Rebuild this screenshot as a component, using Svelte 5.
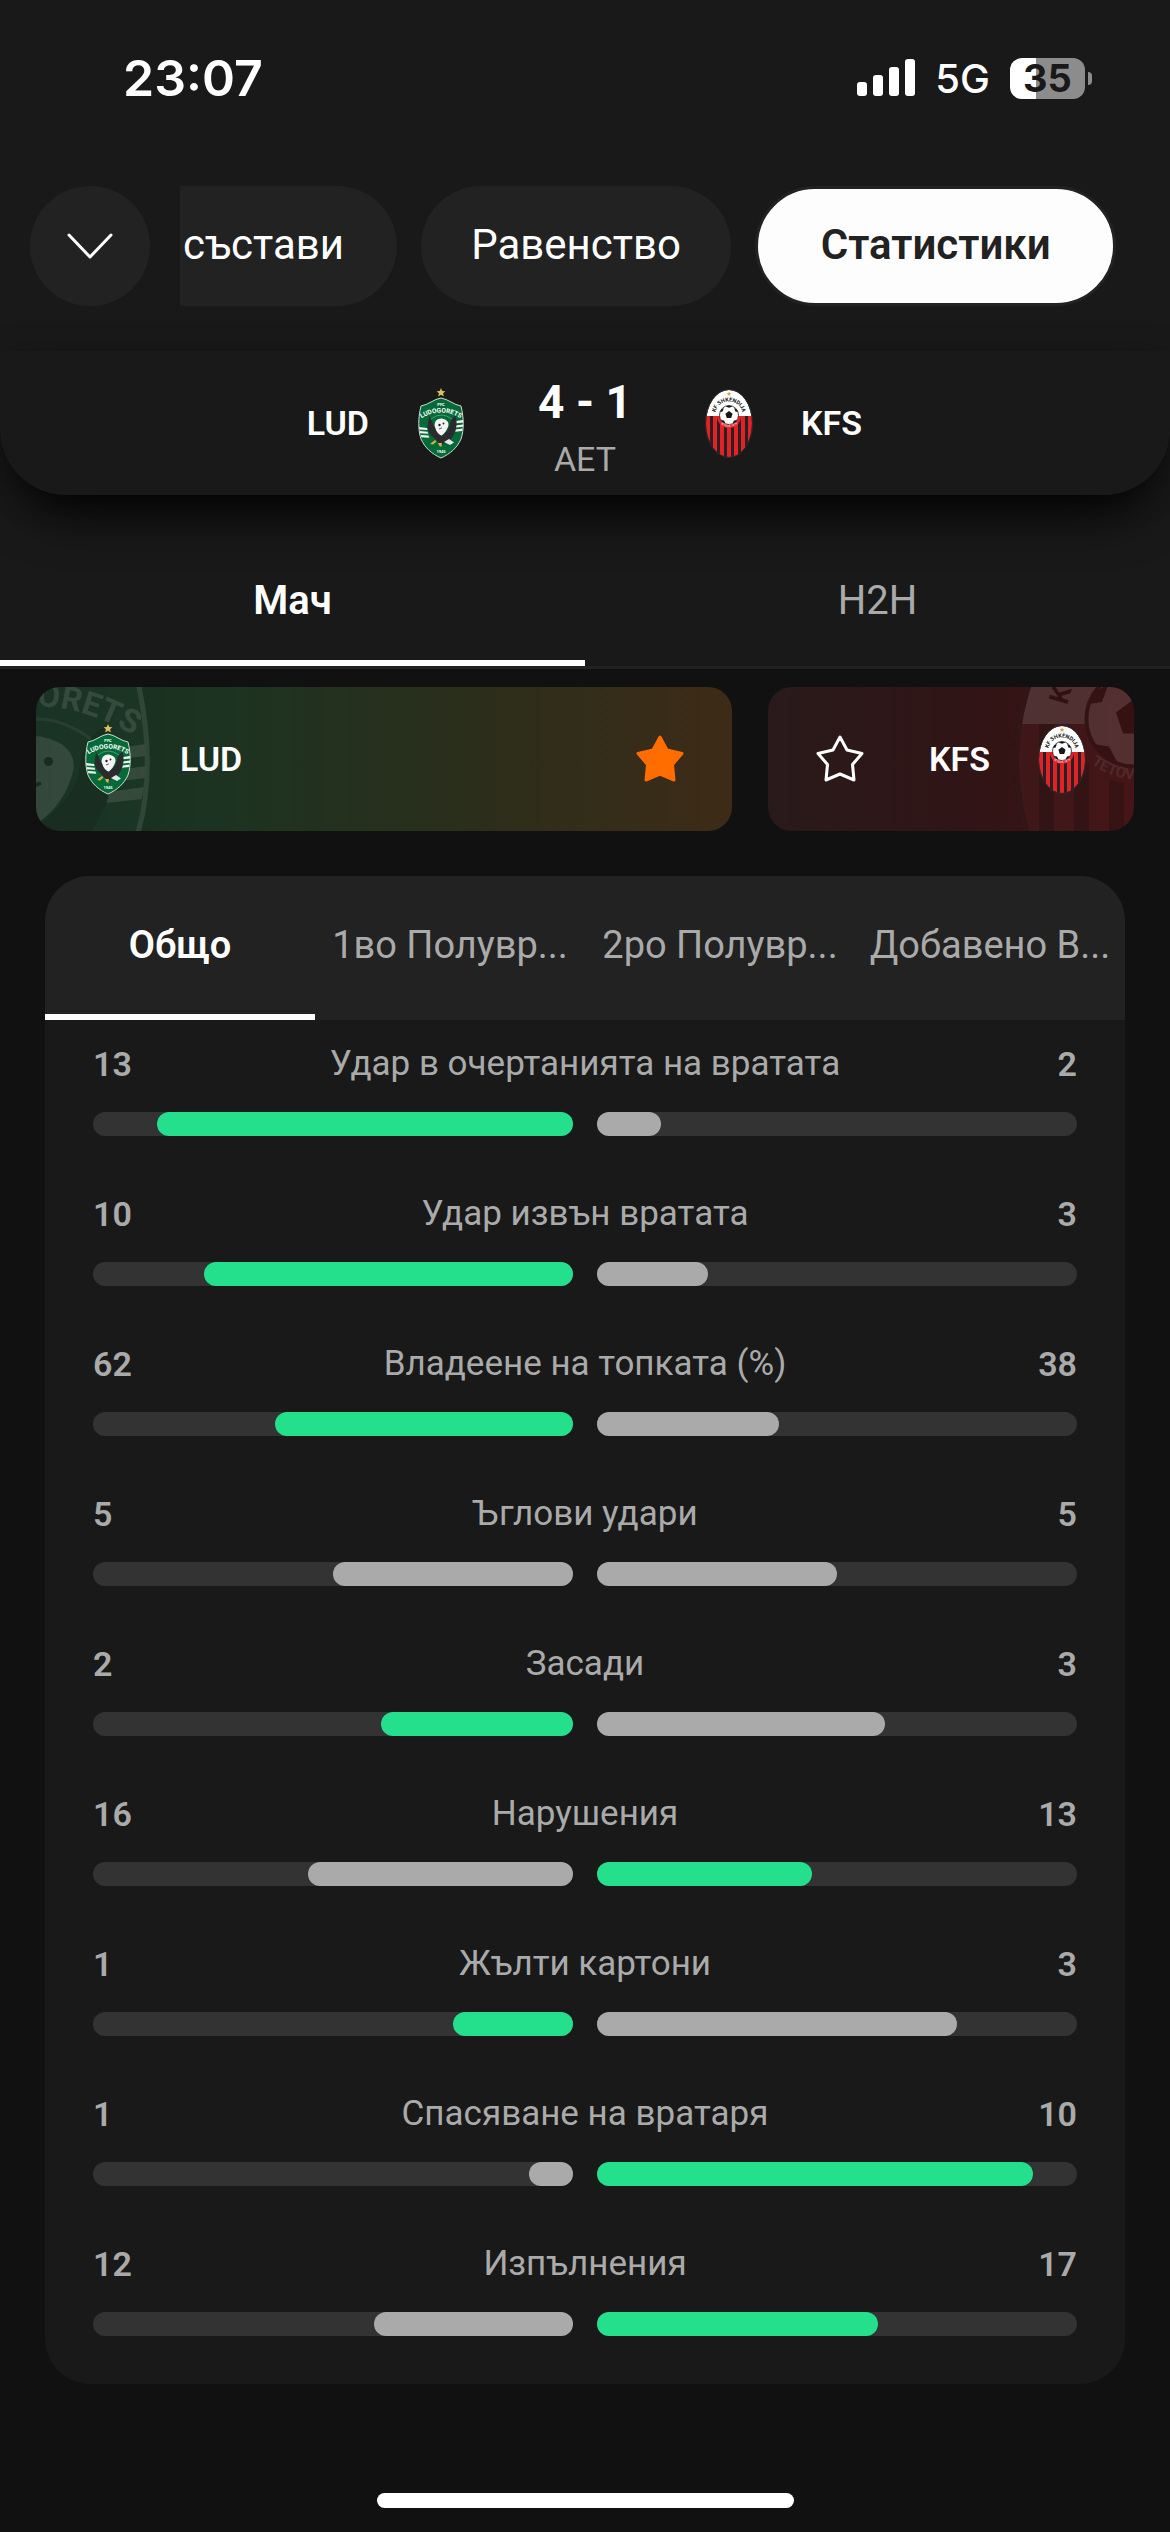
<script lang="ts">
  const sections = [
    { label: "състави", cut: true },
    { label: "Равенство" },
    { label: "Статистики", active: true },
  ];

  const periods = ["Общо", "1во Полувр...", "2ро Полувр...", "Добавено В..."];

  type Stat = {
    label: string;
    home: number;
    away: number;
    lead?: "home" | "away";
  };

  const stats: Stat[] = [
    { label: "Удар в очертанията на вратата", home: 13, away: 2, lead: "home" },
    { label: "Удар извън вратата", home: 10, away: 3, lead: "home" },
    { label: "Владеене на топката (%)", home: 62, away: 38, lead: "home" },
    { label: "Ъглови удари", home: 5, away: 5 },
    { label: "Засади", home: 2, away: 3, lead: "home" },
    { label: "Нарушения", home: 16, away: 13, lead: "away" },
    { label: "Жълти картони", home: 1, away: 3, lead: "home" },
    { label: "Спасяване на вратаря", home: 1, away: 10, lead: "away" },
    { label: "Изпълнения", home: 12, away: 17, lead: "away" },
  ];

  let tab = $state("Мач");
  let period = $state("Общо");
  let favourite = $state("LUD");

  const share = (value: number, stat: Stat) =>
    (value / (stat.home + stat.away)) * 100;
</script>

{#snippet crestLud(id: string)}
  <svg class="crest" viewBox="0 0 72 72" aria-hidden="true">
    <path d="M36 1l1.3 2.9 3.1.3-2.3 2.1.7 3.1-2.8-1.6-2.8 1.6.7-3.1-2.3-2.1 3.1-.3z" fill="#d8c25c" />
    <path
      d="M36 11C43 12 49 18 56 19C59 31 59 43 56 52C52 61 45 67 36 71C27 67 20 61 16 52C13 43 13 31 16 19C23 18 29 12 36 11Z"
      fill="#046a38"
      stroke="#cfdcd4"
      stroke-width="1"
    />
    <path d="M26 32Q36 24 47 32" fill="none" stroke="#7fb597" stroke-width=".6" />
    <g fill="#f2f5f3">
      <path d="M14 40l8 1 .5 2-8-.6zM14.6 44l8 .8.6 2-8-.6zM15.8 48l7.600.6 1 2.200-8-.6z" />
      <path d="M51 34l7-1v2.400l-6.800.8zM50.600 38.400l7.600-1-.2 2.400-7.300.8zM50.400 42.600l7.200-1-.5 2.400-7 .8z" />
    </g>
    <path d="M29.500 38Q30 31 37 31.500Q44 33 43.500 38Q42 45 36 49Q31 46 29.500 38Z" fill="#f4f4f4" />
    <path
      d="M24.500 29.500C21.500 38 22 45 28 50L32 54L36 58L42 55L46 52C51 46 53 37 50.500 28.500C47 31 45 34 44.500 39C43 44 40 46 37 49C33 47 31 45 30 41C28 37 26.500 33 24.500 29.500Z"
      fill="#2b2b2d"
    />
    <circle cx="34.500" cy="38" r="1.200" fill="#222" />
    <circle cx="38.500" cy="36.500" r=".9" fill="#222" />
    <path d="M34 42l3-1.200" stroke="#222" stroke-width=".7" />
    <path d="M39 55l5-3 5 3.500-4 2.500z" fill="#e6e6e6" />
    <path d="M25 57l5-4 1.500 1.600-3.500 3zM33 56h4l-.6 4-2-1z" fill="#d3b445" />
    <path id="{id}-name" d="M17 31Q36 20 55 31" fill="none" />
    <g fill="#fff" font-weight="700" text-anchor="middle">
      <text x="36" y="18.500" font-size="4">PFC</text>
      <text font-size="6.500">
        <textPath href="#{id}-name" startOffset="50%">LUDOGORETS</textPath>
      </text>
      <text x="36" y="66" font-size="4">1945</text>
    </g>
  </svg>
{/snippet}

{#snippet crestKfs(id: string)}
  <svg class="crest" viewBox="0 0 72 72" aria-hidden="true">
    <clipPath id="{id}-oval"><ellipse cx="36" cy="36.5" rx="23" ry="33.5" /></clipPath>
    <g clip-path="url(#{id}-oval)">
      <rect x="12" y="2" width="48" height="28" fill="#fff" />
      <rect x="12" y="29" width="48" height="42" fill="#2a2022" />
      <g fill="#e32228">
        <rect x="12" y="29" width="5" height="42" />
        <rect x="20" y="29" width="4" height="42" />
        <rect x="27" y="29" width="4" height="42" />
        <rect x="34" y="29" width="4" height="42" />
        <rect x="41" y="29" width="4" height="42" />
        <rect x="48" y="29" width="4" height="42" />
        <rect x="55" y="29" width="5" height="42" />
      </g>
      <path d="M24 29A12 12 0 0 0 48 29Z" fill="#e32228" />
    </g>
    <ellipse cx="36" cy="36.5" rx="23.5" ry="34" fill="none" stroke="#2c2c2c" stroke-width="1" />
    <circle cx="36" cy="28" r="9.5" fill="#fff" stroke="#222" stroke-width=".8" />
    <g fill="#17171a">
      <path d="M36 24l3.600 2.700-1.400 4.200h-4.400l-1.400-4.200z" />
      <path d="M32.500 19.400l3.500 1.400 3.500-1.400-3.500-1zM27 25l2.600-.4 1.300-3.600-2.700 1.600zM45 25l-2.600-.4-1.300-3.600 2.700 1.600zM28 33l3 .5 1.600 3-3-1.200zM44 33l-3 .5-1.600 3 3-1.200z" />
    </g>
    <path d="M36 4.500l.7 1.500 1.600.2-1.200 1.100.3 1.600-1.400-.8-1.400.8.300-1.600-1.200-1.100 1.600-.2z" fill="#d9a441" />
    <path id="{id}-name" d="M22.500 28C22.500 10 49.500 10 49.500 28" fill="none" />
    <path id="{id}-town" d="M24 34Q36 46 48 34" fill="none" />
    <g font-weight="700" text-anchor="middle">
      <text font-size="5.5" fill="#111">
        <textPath href="#{id}-name" startOffset="50%">KF SHKËNDIJA</textPath>
      </text>
      <text font-size="3" fill="#f6caca">
        <textPath href="#{id}-town" startOffset="50%">TETOVË 1979</textPath>
      </text>
    </g>
  </svg>
{/snippet}

{#snippet star(on: boolean)}
  <svg class="star" class:on viewBox="0 0 48 48" aria-hidden="true">
    <path d="M24 2L31 15L46 18.5L36.5 29.5L38 45L24 39L10 45L11.5 29.5L2 18.5L17 15Z" />
  </svg>
{/snippet}

<div class="screen" lang="bg">
  <div class="top">
    <div class="status-bar">
      <span class="time">23:07</span>
      <div class="status-icons">
        <svg class="signal" viewBox="0 0 58 38" aria-hidden="true">
          <rect x="0" y="23" width="10" height="14" rx="3" />
          <rect x="16" y="16" width="10" height="21" rx="3" />
          <rect x="32" y="8" width="10" height="29" rx="3" />
          <rect x="48" y="0" width="10" height="37" rx="3" />
        </svg>
        <span class="network">5G</span>
        <div class="battery"><span class="battery-body">35</span><span class="battery-cap"></span></div>
      </div>
    </div>

    <div class="nav">
      <button class="close" aria-label="Затвори">
        <svg viewBox="0 0 48 48" aria-hidden="true"><path d="M3 13L24 35L45 13" /></svg>
      </button>
      <div class="chips">
        {#each sections as section}
          <button class="chip" class:cut={section.cut} class:active={section.active}>{section.label}</button>
        {/each}
      </div>
    </div>

    <div class="scoreboard">
      <div class="team home">
        <span>LUD</span>
        {@render crestLud("head-lud")}
      </div>
      <div class="score">
        <strong>4 - 1</strong>
        <span>AET</span>
      </div>
      <div class="team">
        {@render crestKfs("head-kfs")}
        <span>KFS</span>
      </div>
    </div>

    <div class="tabs">
      {#each ["Мач", "H2H"] as name}
        <button class:active={tab === name} onclick={() => (tab = name)}>{name}</button>
      {/each}
    </div>
  </div>

  <div class="favourites">
    <button class="favourite lud" onclick={() => (favourite = "LUD")}>
      <span class="backdrop">{@render crestLud("back-lud")}</span>
      {@render crestLud("card-lud")}
      <span class="name">LUD</span>
      {@render star(favourite === "LUD")}
    </button>
    <button class="favourite kfs" onclick={() => (favourite = "KFS")}>
      <span class="backdrop">{@render crestKfs("back-kfs")}</span>
      {@render star(favourite === "KFS")}
      <span class="name">KFS</span>
      {@render crestKfs("card-kfs")}
    </button>
  </div>

  <div class="panel">
    <div class="periods">
      {#each periods as name}
        <button class:active={period === name} onclick={() => (period = name)}>{name}</button>
      {/each}
    </div>

    <div class="stats">
      {#each stats as stat}
        <div class="stat">
          <div class="stat-text">
            <strong>{stat.home}</strong>
            <span>{stat.label}</span>
            <strong>{stat.away}</strong>
          </div>
          <div class="bars">
            <div class="track home">
              <div class="fill" class:lead={stat.lead === "home"} style="width: {share(stat.home, stat)}%"></div>
            </div>
            <div class="track">
              <div class="fill" class:lead={stat.lead === "away"} style="width: {share(stat.away, stat)}%"></div>
            </div>
          </div>
        </div>
      {/each}
    </div>
  </div>

  <div class="home-indicator"></div>
</div>

<style>
  :global(body) {
    background: #111;
  }

  .screen {
    display: flex;
    flex-direction: column;
    min-height: 100vh;
    box-sizing: border-box;
    padding-bottom: 24px;
    background: #111;
    color: #fff;
    font-family: Roboto, "Noto Sans", sans-serif;
    font-size: 40px;
  }

  button {
    border: 0;
    padding: 0;
    margin: 0;
    background: none;
    color: inherit;
    font: inherit;
    cursor: pointer;
  }

  .top {
    background: #191919;
  }

  /* Status bar */
  .status-bar {
    display: flex;
    align-items: center;
    justify-content: space-between;
    height: 156px;
    padding: 0 78px 0 123px;
    font-family: Inter, sans-serif;
  }

  .time {
    font-size: 50px;
    font-weight: 600;
  }

  .status-icons {
    display: flex;
    align-items: center;
    gap: 20px;
  }

  .signal {
    width: 58px;
    height: 38px;
    fill: #fff;
  }

  .network {
    font-size: 40px;
    font-weight: 500;
  }

  .battery {
    display: flex;
    align-items: center;
    gap: 3px;
  }

  .battery-body {
    width: 75px;
    height: 41px;
    border-radius: 12px;
    background: linear-gradient(90deg, #fff 35%, #8c8c8c 35%);
    color: #191919;
    font-size: 38px;
    font-weight: 700;
    line-height: 41px;
    text-align: center;
  }

  .battery-cap {
    width: 4px;
    height: 13px;
    border-radius: 0 4px 4px 0;
    background: #8c8c8c;
  }

  /* Section chips */
  .nav {
    display: flex;
    gap: 30px;
    margin-top: 30px;
    padding-left: 30px;
  }

  .close {
    display: flex;
    align-items: center;
    justify-content: center;
    flex-shrink: 0;
    width: 120px;
    height: 120px;
    border-radius: 50%;
    background: #222;
  }

  .close svg {
    width: 48px;
    height: 48px;
    fill: none;
    stroke: #fff;
    stroke-width: 3;
    stroke-linecap: round;
    stroke-linejoin: round;
  }

  .chips {
    display: flex;
    flex: 1;
    gap: 24px;
    padding-right: 54px;
    overflow: hidden;
    font-size: 42px;
  }

  .chip {
    flex: 1 0 auto;
    height: 120px;
    padding: 0 48px 3px;
    border-radius: 60px;
    background: #222;
  }

  .chip.cut {
    padding-left: 3px;
    border-radius: 0 60px 60px 0;
    text-align: left;
  }

  .chip.active {
    flex-grow: 6;
    box-sizing: border-box;
    border: 3px solid #222;
    background: #fdfdfd;
    color: #222;
    font-weight: 600;
  }

  /* Scoreboard */
  .scoreboard {
    position: relative;
    display: grid;
    grid-template-columns: 1fr 216px 1fr;
    align-items: center;
    height: 144px;
    margin-top: 45px;
    border-radius: 0 0 66px 66px;
    background: #191919;
    box-shadow:
      0 36px 54px -24px #000,
      0 6px 36px -3px rgba(0, 0, 0, 0.3);
  }

  .team {
    display: flex;
    align-items: center;
    gap: 36px;
    font-size: 34px;
    font-weight: 600;
  }

  .team.home {
    justify-content: flex-end;
  }

  .crest {
    display: block;
    width: 72px;
    height: 72px;
    font-family: Roboto, sans-serif;
  }

  .score {
    display: flex;
    flex-direction: column;
    padding-top: 12px;
    text-align: center;
  }

  .score strong {
    font-size: 46px;
    font-weight: 700;
    line-height: 60px;
  }

  .score span {
    color: #aaa;
    font-size: 34px;
    line-height: 54px;
  }

  .tabs {
    display: flex;
    padding-top: 45px;
    border-bottom: 3px solid #222;
  }

  .tabs button {
    flex: 1;
    height: 126px;
    border-bottom: 6px solid transparent;
    color: #aaa;
  }

  .tabs button.active,
  .periods button.active {
    border-color: #fff;
    color: #fff;
    font-weight: 600;
  }

  /* Favourite team cards */
  .favourites {
    display: grid;
    grid-template-columns: 696fr 366fr;
    gap: 36px;
    padding: 18px 36px 0;
  }

  .favourite {
    position: relative;
    display: flex;
    align-items: center;
    gap: 36px;
    height: 144px;
    padding: 0 36px;
    border-radius: 24px;
    overflow: hidden;
    font-size: 34px;
    font-weight: 600;
  }

  .favourite.lud {
    padding-right: 48px;
    background: linear-gradient(90deg, #162d20 0%, #1c3321 25%, #2c2e1b 65%, #3d2b17 100%);
  }

  .favourite.kfs {
    padding-left: 48px;
    background: linear-gradient(90deg, #291a1b 0%, #301516 50%, #3b1112 100%);
  }

  .lud .name,
  .kfs .star {
    margin-right: auto;
  }

  .favourite > :not(.backdrop) {
    position: relative;
  }

  .backdrop {
    position: absolute;
    top: -108px;
    filter: grayscale(0.6);
    opacity: 0.13;
  }

  .lud .backdrop {
    left: -180px;
  }

  .kfs .backdrop {
    right: -180px;
  }

  .backdrop .crest {
    width: 360px;
    height: 360px;
  }

  .star {
    width: 48px;
    height: 48px;
    fill: none;
    stroke: #fff;
    stroke-width: 3;
    stroke-linejoin: round;
  }

  .star.on {
    fill: #ff6c00;
    stroke: #ff6c00;
  }

  /* Statistics */
  .panel {
    margin: 45px 45px 0;
    border-radius: 45px;
    background: #191919;
    overflow: hidden;
  }

  .periods {
    display: flex;
    background: #222;
    font-size: 38px;
  }

  .periods button {
    flex: 1 1 0;
    height: 144px;
    border-bottom: 6px solid transparent;
    color: #aaa;
    white-space: nowrap;
  }

  .stats {
    display: flex;
    flex-direction: column;
    gap: 54px;
    padding: 20px 48px 48px;
    color: #aaa;
    font-size: 34px;
  }

  .stat {
    display: flex;
    flex-direction: column;
    gap: 24px;
  }

  .stat-text {
    display: grid;
    grid-template-columns: 1fr auto 1fr;
    line-height: 48px;
  }

  .stat-text span {
    font-size: 35px;
  }

  .stat-text strong {
    font-weight: 600;
  }

  .stat-text strong:last-child {
    text-align: right;
  }

  .bars {
    display: flex;
    gap: 24px;
  }

  .track {
    display: flex;
    flex: 1;
    height: 24px;
    border-radius: 12px;
    background: #333;
  }

  .track.home {
    justify-content: flex-end;
  }

  .fill {
    border-radius: 12px;
    background: #aaa;
  }

  .fill.lead {
    background: #24e08c;
  }

  .home-indicator {
    width: 417px;
    height: 15px;
    margin: auto auto 0;
    border-radius: 8px;
    background: #fff;
  }
</style>
